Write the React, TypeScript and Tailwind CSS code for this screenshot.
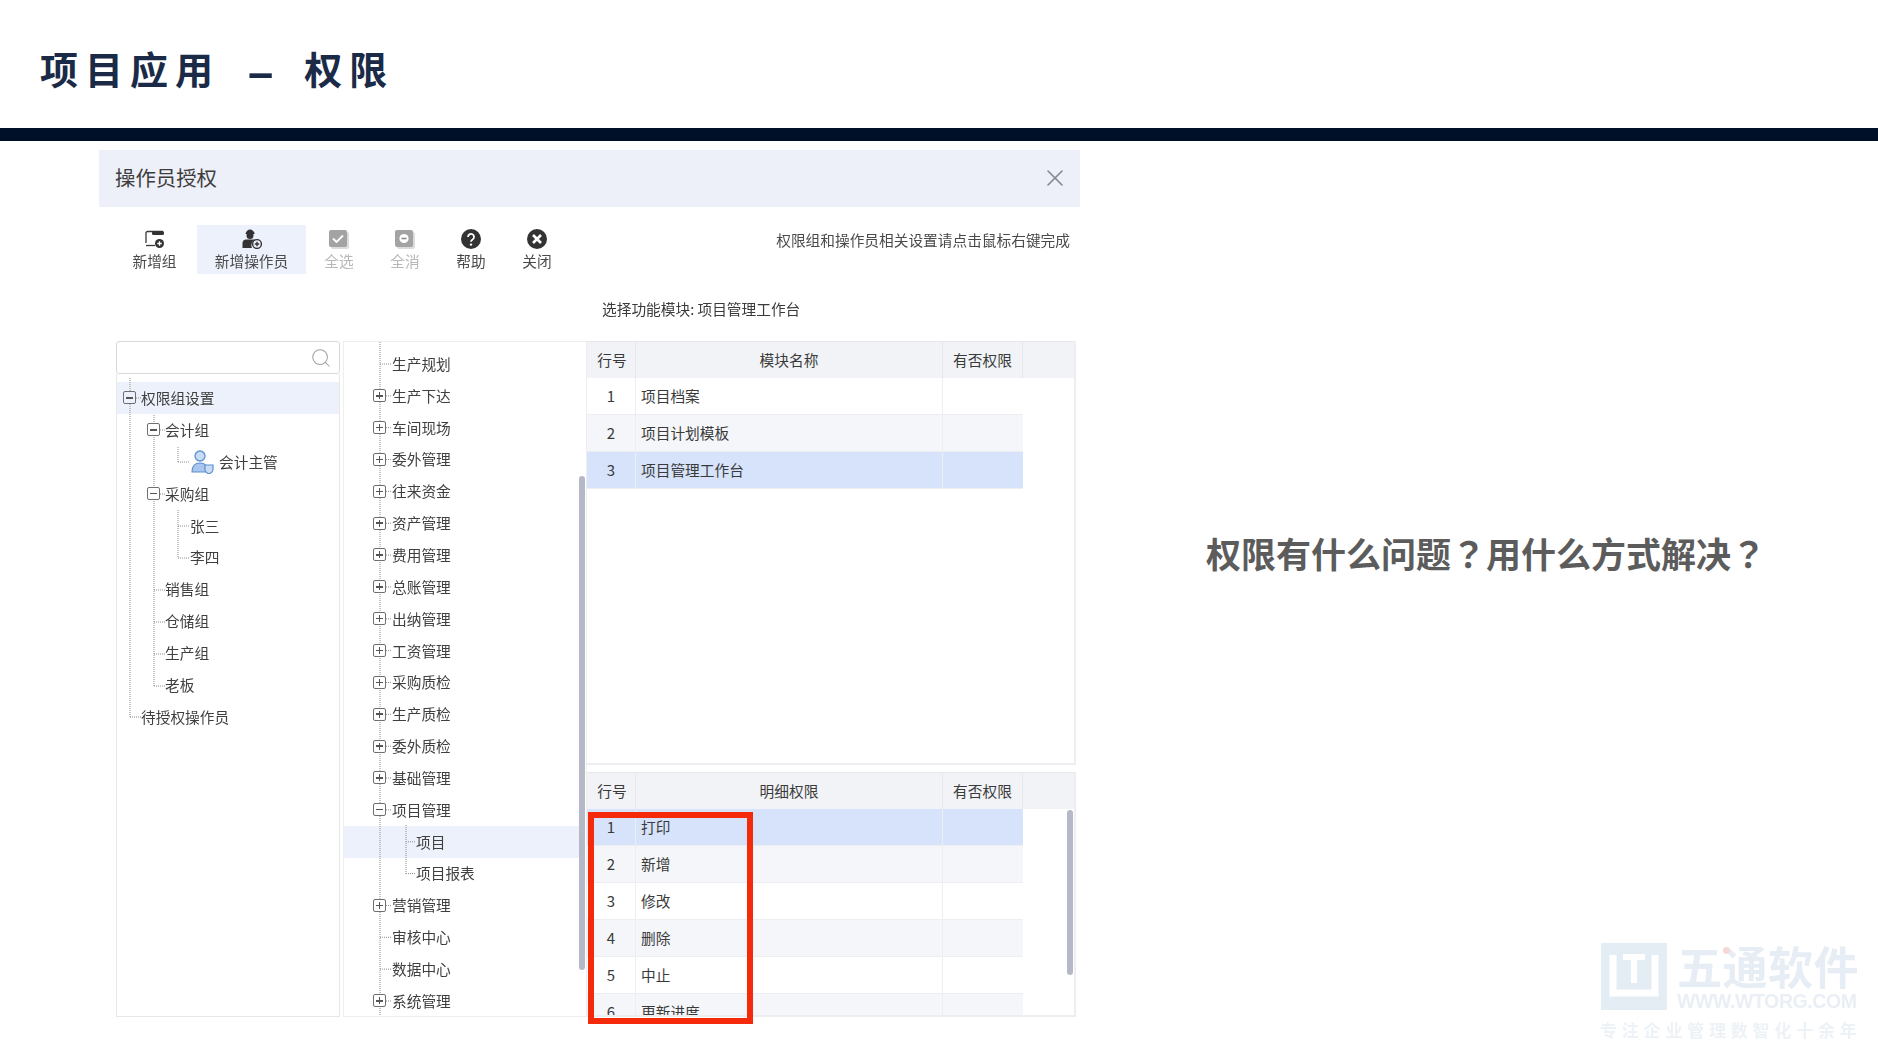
import React from "react";
import { Search, X } from "lucide-react";

const L = "#8c8c8c";

function Box({ minus, bg = "bg-white" }: { minus?: boolean; bg?: string }) {
  return (
    <span className={`relative z-10 flex h-[13px] w-[13px] shrink-0 items-center justify-center rounded-[2px] border border-[#6f6f6f] ${bg}`}>
      <span className="relative block h-[1.5px] w-[7px] bg-[#555]">
        {!minus && <span className="absolute left-[2.75px] top-[-2.75px] block h-[7px] w-[1.5px] bg-[#555]" />}
      </span>
    </span>
  );
}

function Guides({ lines }: { lines: number[][] }) {
  return (
    <svg className="pointer-events-none absolute inset-0 z-[1] h-full w-full">
      {lines.map((l, i) => (
        <line key={i} x1={l[0]} y1={l[1]} x2={l[2]} y2={l[3]} stroke={L} strokeWidth="1" strokeDasharray="1 1" />
      ))}
    </svg>
  );
}

const leftRows: { t: string; pl: string; box?: boolean; sel?: boolean; user?: boolean }[] = [
  { t: "权限组设置", pl: "pl-[6px]", box: true, sel: true },
  { t: "会计组", pl: "pl-[30px]", box: true },
  { t: "会计主管", pl: "pl-[74px]", user: true },
  { t: "采购组", pl: "pl-[30px]", box: true },
  { t: "张三", pl: "pl-[73px]" },
  { t: "李四", pl: "pl-[73px]" },
  { t: "销售组", pl: "pl-[48px]" },
  { t: "仓储组", pl: "pl-[48px]" },
  { t: "生产组", pl: "pl-[48px]" },
  { t: "老板", pl: "pl-[48px]" },
  { t: "待授权操作员", pl: "pl-[24px]" },
];

const midRows: { t: string; box?: boolean; minus?: boolean; child?: boolean; sel?: boolean }[] = [
  { t: "生产规划" },
  { t: "生产下达", box: true },
  { t: "车间现场", box: true },
  { t: "委外管理", box: true },
  { t: "往来资金", box: true },
  { t: "资产管理", box: true },
  { t: "费用管理", box: true },
  { t: "总账管理", box: true },
  { t: "出纳管理", box: true },
  { t: "工资管理", box: true },
  { t: "采购质检", box: true },
  { t: "生产质检", box: true },
  { t: "委外质检", box: true },
  { t: "基础管理", box: true },
  { t: "项目管理", box: true, minus: true },
  { t: "项目", child: true, sel: true },
  { t: "项目报表", child: true },
  { t: "营销管理", box: true },
  { t: "审核中心" },
  { t: "数据中心" },
  { t: "系统管理", box: true },
];

function TableHead({ name }: { name: string }) {
  return (
    <div className="flex h-[37px] shrink-0 items-center border-t border-[#e6e8ed] bg-[#f1f3f7] text-[#3a3a3a]">
      <div className="flex h-full w-[49px] items-center justify-center border-r border-[#e6e8ed] pl-[2px]">行号</div>
      <div className="flex h-full w-[307px] items-center justify-center border-r border-[#e6e8ed]">{name}</div>
      <div className="flex h-full w-[80px] items-center justify-center border-r border-[#e6e8ed]">有否权限</div>
    </div>
  );
}

function TableRow({ n, t, bg }: { n: number; t: string; bg: string }) {
  return (
    <div className={`flex h-[37px] w-[436px] shrink-0 items-center border-b border-[#eceef2] text-[#3a3a3a] ${bg}`}>
      <div className="flex h-full w-[49px] items-center justify-center border-r border-[#eceef2] text-[15px]">{n}</div>
      <div className="flex h-full w-[307px] items-center border-r border-[#eceef2] pl-[5px]">{t}</div>
      <div className="h-full w-[80px]" />
    </div>
  );
}

function ToolItem({ label, w, active, disabled, children }: { label: string; w: string; active?: boolean; disabled?: boolean; children: React.ReactNode }) {
  return (
    <div className={`flex h-[49px] flex-col items-center pt-[4px] ${w} ${active ? "bg-[#edf1fb]" : ""}`}>
      <div className="flex h-[20px] items-center justify-center">{children}</div>
      <div className={`mt-[2px] leading-[20px] ${disabled ? "text-[#b8b8b8]" : "text-[#4a4a4a]"}`}>{label}</div>
    </div>
  );
}

export default function App() {
  const mid = (i: number) => 22 + 31.85 * i;
  const midLines: number[][] = [[36, 0, 36, 676], [62, 483, 62, 532]];
  midRows.forEach((r, i) => {
    if (!r.box && !r.child) midLines.push([36, mid(i), 48, mid(i)]);
    if (r.box) midLines.push([42, mid(i), 48, mid(i)]);
    if (r.child) midLines.push([62, mid(i), 72, mid(i)]);
  });

  return (
    <div className="flex h-[1056px] w-[1878px] flex-col overflow-hidden bg-white font-['Noto_Sans_CJK_SC','Liberation_Sans',sans-serif]">
      <header className="flex h-[128px] shrink-0 items-center pl-[40px] pt-[8px] text-[38px] font-bold leading-none tracking-[7px] text-[#1a2a47]">
        <span>项目应用</span>
        <span className="ml-[27px] text-[50px] tracking-normal">–</span>
        <span className="ml-[30px]">权限</span>
      </header>
      <div className="h-[13px] shrink-0 bg-[#001029]" />

      <div className="flex min-h-0 flex-1">
        <section className="ml-[99px] mt-[9px] w-[981px] shrink-0 text-[14.7px] leading-[20px] blur-[0.4px]">
          <div className="flex h-[57px] items-center justify-between bg-[#edf0f8] pl-[16px] pr-[11px] text-[20.4px] text-[#3d3d3d]">
            <span className="pb-[3px]">操作员授权</span>
            <X className="mb-[2px] h-[28px] w-[28px] text-[#85898f]" strokeWidth={1.4} />
          </div>

          <div className="mt-[18px] flex h-[49px] pl-[13px]">
            <ToolItem label="新增组" w="w-[85px]">
              <svg width="20" height="19" viewBox="0 0 20 19">
                <path d="M1 13V3a1.5 1.5 0 0 1 1.5-1.5H18" fill="none" stroke="#3a3a3a" strokeWidth="1.3" />
                <path d="M1 15.5h9" stroke="#3a3a3a" strokeWidth="1.3" />
                <rect x="7" y="1" width="12" height="4" rx="1.5" fill="#333" />
                <circle cx="14.5" cy="13.5" r="4.5" fill="#333" />
                <path d="M12.3 13.5h4.4M14.5 11.3v4.4" stroke="#fff" strokeWidth="1.3" />
              </svg>
            </ToolItem>
            <ToolItem label="新增操作员" w="w-[109px]" active>
              <svg width="20" height="20" viewBox="0 0 20 20">
                <path d="M3.5 5C4 2 6 .5 8 .5S12.2 2 12.7 5z" fill="#333" />
                <circle cx="8" cy="6.5" r="3.5" fill="#333" />
                <path d="M0.5 19v-5c0-2.5 2-3.5 3.5-3.5h8c.8 0 1.2.2 1.2.2A6 6 0 0 0 10 19z" fill="#333" />
                <circle cx="15" cy="15" r="4.4" fill="#edf1fb" stroke="#333" strokeWidth="1.4" />
                <path d="M12.8 15h4.4M15 12.8v4.4" stroke="#333" strokeWidth="1.4" />
              </svg>
            </ToolItem>
            <ToolItem label="全选" w="w-[66px]" disabled>
              <svg width="20" height="19" viewBox="0 0 20 19">
                <rect x="2" y="2" width="18" height="17" rx="2" fill="#dcdcdc" />
                <rect x="0" y="0" width="18" height="17" rx="2" fill="#a3a3a3" />
                <path d="M4 8.5l3.5 3.5L14 5.5" fill="none" stroke="#fff" strokeWidth="1.8" />
              </svg>
            </ToolItem>
            <ToolItem label="全消" w="w-[66px]" disabled>
              <svg width="20" height="19" viewBox="0 0 20 19">
                <rect x="2" y="2" width="18" height="17" rx="2" fill="#dcdcdc" />
                <rect x="0" y="0" width="18" height="17" rx="2" fill="#a3a3a3" />
                <circle cx="9" cy="8.5" r="4.6" fill="#fff" />
                <path d="M6.5 8.5h5" stroke="#8a8a8a" strokeWidth="1.6" />
              </svg>
            </ToolItem>
            <ToolItem label="帮助" w="w-[66px]">
              <svg width="20" height="20" viewBox="0 0 20 20">
                <circle cx="10" cy="10" r="10" fill="#333" />
                <path d="M7 8a3 3 0 1 1 4.6 2.5c-1 .7-1.6 1.1-1.6 2.3" fill="none" stroke="#fff" strokeWidth="1.8" />
                <circle cx="10" cy="15.6" r="1.2" fill="#fff" />
              </svg>
            </ToolItem>
            <ToolItem label="关闭" w="w-[66px]">
              <svg width="20" height="20" viewBox="0 0 20 20">
                <circle cx="10" cy="10" r="10" fill="#333" />
                <path d="M6 6l8 8M14 6l-8 8" stroke="#fff" strokeWidth="2.6" />
              </svg>
            </ToolItem>
            <div className="ml-auto pr-[10px] pt-[5px] text-[#4a4a4a]">权限组和操作员相关设置请点击鼠标右键完成</div>
          </div>

          <div className="mt-[25px] pl-[503px] text-[#3a3a3a]">选择功能模块: 项目管理工作台</div>

          <div className="mt-[22px] flex h-[676px] pl-[17px]">
            <div className="flex w-[224px] shrink-0 flex-col">
              <div className="flex h-[33px] shrink-0 items-center justify-end rounded-[3px] border border-[#d8d8d8] pr-[7px]">
                <Search className="h-[22px] w-[22px] text-[#a0a0a0]" strokeWidth={1.1} />
              </div>
              <div className="relative flex-1 border-x border-b border-[#e8e8e8] pt-[8px] text-[#3f3f3f]">
                <Guides
                  lines={[
                    [13, 4, 13, 343], [13, 343, 24, 343], [19, 24, 24, 24],
                    [37, 41, 37, 312], [43, 56, 48, 56], [43, 120, 48, 120],
                    [37, 216, 48, 216], [37, 248, 48, 248], [37, 280, 48, 280], [37, 312, 48, 312],
                    [61, 73, 61, 88], [61, 88, 73, 88],
                    [61, 136, 61, 184], [61, 152, 73, 152], [61, 184, 73, 184],
                  ]}
                />
                {leftRows.map((r) => (
                  <div key={r.t} className={`flex h-[31.9px] items-center ${r.pl} ${r.sel ? "bg-[#edf1fb]" : ""}`}>
                    {r.box && <span className="mr-[5px]"><Box minus bg={r.sel ? "bg-[#edf1fb]" : "bg-white"} /></span>}
                    {r.user && (
                      <svg width="24" height="24" viewBox="0 0 24 24" className="mr-[4px]">
                        <circle cx="9" cy="6" r="5" fill="#c9dcf5" stroke="#5d8fcf" strokeWidth="1.3" />
                        <path d="M1 22c0-6 3-9 8-9 3 0 5 1 6 3v6z" fill="#a9c6ee" stroke="#5d8fcf" strokeWidth="1.1" />
                        <path d="M14 15h8v5c0 2-2 3-4 4-2-1-4-2-4-4z" fill="#c9dcf5" stroke="#5d8fcf" strokeWidth="1.2" />
                      </svg>
                    )}
                    <span className="relative z-10">{r.t}</span>
                  </div>
                ))}
              </div>
            </div>

            <div className="relative ml-[3px] w-[244px] shrink-0 border-x border-y border-[#eeeeee] pt-[6px] text-[#3f3f3f]">
              <Guides lines={midLines} />
              {midRows.map((r) => (
                <div key={r.t} className={`flex h-[31.85px] items-center ${r.child ? "pl-[72px]" : r.box ? "pl-[29px]" : "pl-[48px]"} ${r.sel ? "mr-[7px] bg-[#edf1fb]" : ""}`}>
                  {r.box && <span className="mr-[6px]"><Box minus={r.minus} /></span>}
                  <span className="relative z-10">{r.t}</span>
                </div>
              ))}
              <div className="absolute right-[1px] top-[134px] z-10 h-[494px] w-[6px] rounded-[3px] bg-[#b5b8c6]" />
            </div>

            <div className="flex w-[489px] shrink-0 flex-col">
              <div className="h-[424px] shrink-0 border-r-2 border-b-2 border-[#eceef2]">
                <TableHead name="模块名称" />
                <TableRow n={1} t="项目档案" bg="bg-white" />
                <TableRow n={2} t="项目计划模板" bg="bg-[#f5f6f9]" />
                <TableRow n={3} t="项目管理工作台" bg="bg-[#d6e3fb]" />
              </div>
              <div className="relative mt-[7px] flex h-[245px] shrink-0 flex-col border-r-2 border-b-2 border-[#eceef2]">
                <TableHead name="明细权限" />
                <div className="relative flex-1 overflow-hidden">
                  <TableRow n={1} t="打印" bg="bg-[#d6e3fb]" />
                  <TableRow n={2} t="新增" bg="bg-[#f5f6f9]" />
                  <TableRow n={3} t="修改" bg="bg-white" />
                  <TableRow n={4} t="删除" bg="bg-[#f5f6f9]" />
                  <TableRow n={5} t="中止" bg="bg-white" />
                  <TableRow n={6} t="更新进度" bg="bg-[#f5f6f9]" />
                  <div className="absolute right-[1px] top-[1px] h-[165px] w-[6px] rounded-[3px] bg-[#b5b8c6]" />
                </div>
                <div className="absolute left-[1px] top-[40px] z-20 h-[212px] w-[165px] border-[6px] border-[#f52a0a]" />
              </div>
            </div>
          </div>
        </section>

        <aside className="flex flex-1 flex-col">
          <div className="mt-[388px] pl-[126px] text-[35px] font-bold leading-[48px] text-[#5c5c5c]">
            权限有什么问题<span className="font-['Noto_Sans_CJK_TC',sans-serif]">？</span>用什么方式解决<span className="font-['Noto_Sans_CJK_TC',sans-serif]">？</span>
          </div>
          <div className="ml-[521px] mt-[366px] flex gap-[10px] blur-[0.5px]">
            <svg width="66" height="67" viewBox="0 0 66 67" className="shrink-0">
              <rect width="66" height="67" fill="#e4ecf4" />
              <path d="M12 12v38h42V12" fill="none" stroke="#fff" strokeWidth="7" />
              <path d="M22 14h22M33 14v26" fill="none" stroke="#fff" strokeWidth="6" />
            </svg>
            <div className="relative">
              <div className="text-[45px] font-bold leading-[46px] tracking-[0.5px] text-[#e6edf4]">五通软件</div>
              <div className="absolute left-[46px] top-[4px] h-[7px] w-[7px] rounded-full bg-[#f6d9d6]" />
              <div className="mt-[1px] font-['Liberation_Sans',sans-serif] text-[19.5px] font-bold leading-[22px] tracking-[-0.4px] text-[#e9eff5]">WWW.WTORG.COM</div>
            </div>
          </div>
          <div className="ml-[520px] mt-[6px] text-[17px] font-bold leading-[24px] tracking-[4.8px] text-[#edf2f7] blur-[0.5px]">专注企业管理数智化十余年</div>
        </aside>
      </div>
    </div>
  );
}
